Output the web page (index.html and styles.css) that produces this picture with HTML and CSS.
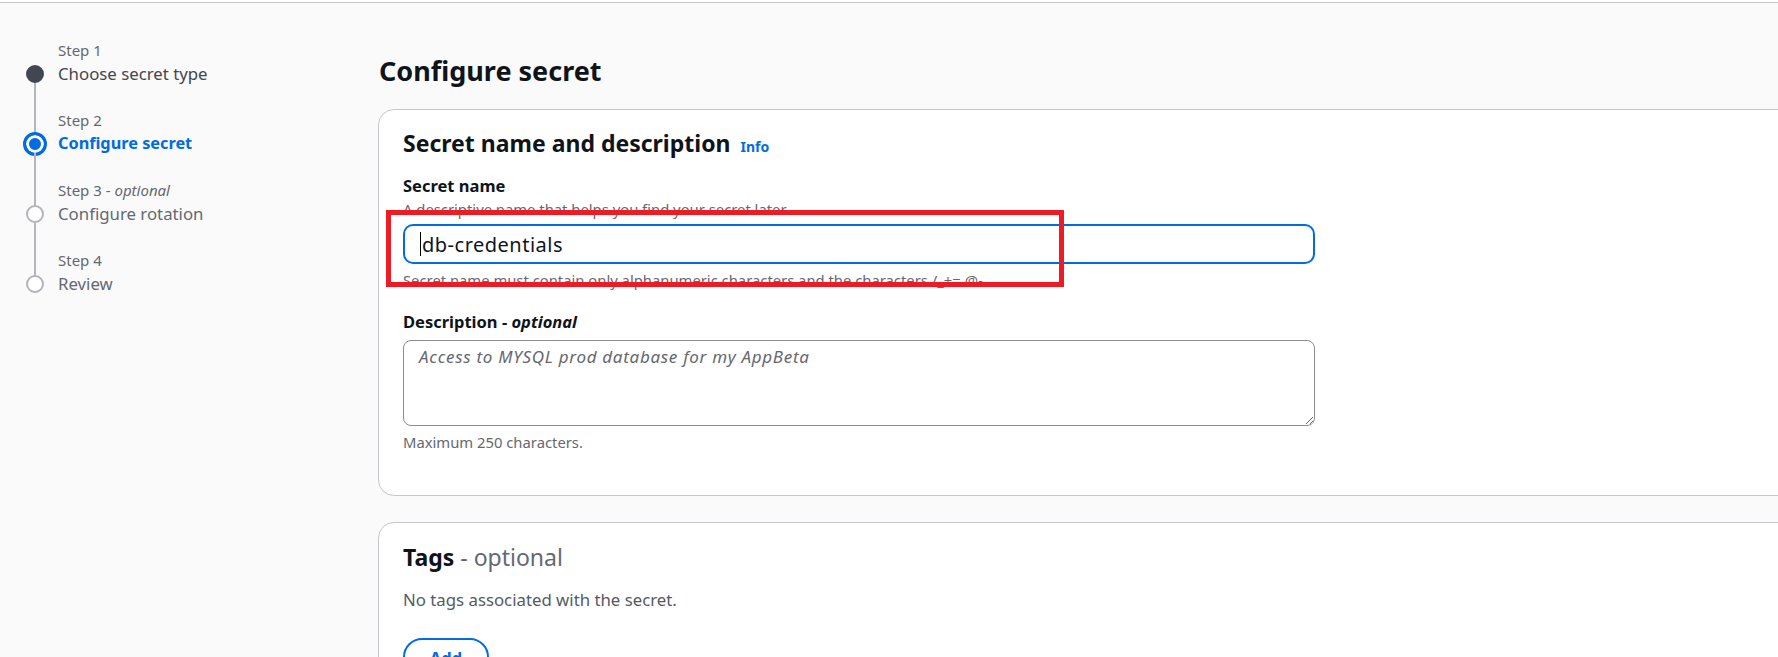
FILE: index.html
```html
<!DOCTYPE html>
<html lang="en">
<head>
<meta charset="utf-8">
<title>Configure secret</title>
<link rel="stylesheet" href="styles.css">
</head>
<body>
<div class="topbar"></div>
<div class="layout">
  <nav class="sidebar">
    <ol class="steps">
      <li class="step first visited">
        <div class="rail"><span class="seg seg-top"></span><span class="dot"></span><span class="seg seg-bottom"></span></div>
        <div class="step-text"><div class="step-label">Step 1</div><div class="step-title">Choose secret type</div></div>
      </li>
      <li class="step active">
        <div class="rail"><span class="seg seg-top"></span><span class="dot"></span><span class="seg seg-bottom"></span></div>
        <div class="step-text"><div class="step-label">Step 2</div><div class="step-title">Configure secret</div></div>
      </li>
      <li class="step">
        <div class="rail"><span class="seg seg-top"></span><span class="dot"></span><span class="seg seg-bottom"></span></div>
        <div class="step-text"><div class="step-label">Step 3 - <i>optional</i></div><div class="step-title">Configure rotation</div></div>
      </li>
      <li class="step last">
        <div class="rail"><span class="seg seg-top"></span><span class="dot"></span><span class="seg seg-bottom"></span></div>
        <div class="step-text"><div class="step-label">Step 4</div><div class="step-title">Review</div></div>
      </li>
    </ol>
  </nav>
  <main class="main">
    <h1 class="page-title">Configure secret</h1>
    <section class="card card-secret">
      <h2 class="card-title">Secret name and description <a class="info" href="#">Info</a></h2>
      <div class="field">
        <div class="label">Secret name</div>
        <div class="desc">A descriptive name that helps you find your secret later.</div>
        <div class="input"><span class="caret"></span>db-credentials</div>
        <div class="hint">Secret name must contain only alphanumeric characters and the characters /_+=.@-</div>
      </div>
      <div class="field field-desc">
        <div class="label">Description - <i>optional</i></div>
        <textarea class="textarea" placeholder="Access to MYSQL prod database for my AppBeta"></textarea>
        <div class="hint">Maximum 250 characters.</div>
      </div>
      <div class="highlight"></div>
    </section>
    <section class="card card-tags">
      <h2 class="card-title">Tags<span class="opt"> - optional</span></h2>
      <p class="empty">No tags associated with the secret.</p>
      <button class="btn">Add</button>
    </section>
  </main>
</div>
</body>
</html>
```
FILE: styles.css
```css
* { box-sizing: border-box; }
html, body {
  margin: 0;
  padding: 0;
  overflow: hidden;
  background: #fafafa;
  font-family: "Noto Sans", "Open Sans", sans-serif;
  color: #0f141a;
}
.topbar {
  height: 3px;
  border-bottom: 1px solid #c6c6cd;
  background: #fff;
}
.layout {
  display: flex;
  align-items: flex-start;
}
.sidebar {
  flex: 0 0 378px;
  padding: 36px 0 0 26px;
}
.steps {
  list-style: none;
  margin: 0;
  padding: 0;
}
.step {
  display: flex;
  gap: 14px;
}
.rail {
  width: 18px;
  display: flex;
  flex-direction: column;
  align-items: center;
}
.seg {
  width: 2px;
  background: #b4b4bb;
}
.seg-top { height: 26px; }
.seg-bottom { height: 26px; }
.first .seg-top, .last .seg-bottom { background: transparent; }
.dot {
  width: 18px;
  height: 18px;
  border-radius: 50%;
  border: 2px solid #b4b4bb;
  background: #fff;
}
.visited .dot {
  background: #424650;
  border-color: #424650;
}
.active .dot {
  width: 24px;
  height: 24px;
  margin: -3px 0;
  border: 3px solid #006ce0;
  background: #006ce0;
  box-shadow: inset 0 0 0 3px #fff;
}
.step-text { padding-bottom: 23px; }
.step-label {
  font-size: 15px;
  line-height: 22px;
  color: #656871;
}
.step-title {
  font-size: 16.8px;
  line-height: 25px;
  color: #656871;
}
.visited .step-title { color: #424650; }
.active .step-title { color: #006ce0; font-weight: 700; font-size: 16.3px; }

.main {
  flex: 0 0 1500px;
  padding-top: 50px;
}
.page-title {
  margin: 0 0 20px;
  font-size: 27px;
  line-height: 36px;
  font-weight: 700;
  padding-left: 1px;
}
.card {
  position: relative;
  background: #fff;
  border: 1px solid #c6c6cd;
  border-radius: 16px;
  padding: 18px 24px 43px;
}
.card-title {
  margin: 0;
  font-size: 23px;
  line-height: 30px;
  font-weight: 700;
}
.info {
  margin-left: 4px;
  font-size: 14px;
  font-weight: 700;
  color: #006ce0;
  text-decoration: none;
}
.field { margin-top: 13px; width: 912px; }
.field-desc { margin-top: 21px; }
.label {
  font-size: 16.5px;
  line-height: 22px;
  font-weight: 700;
}
.desc {
  margin-top: 2px;
}
.desc, .hint {
  font-size: 14.8px;
  line-height: 20px;
  color: #656871;
}
.input {
  margin-top: 5px;
  height: 40px;
  border: 2px solid #006ce0;
  border-radius: 10px;
  padding: 0 16px;
  display: flex;
  align-items: center;
  font-size: 20px;
  letter-spacing: 0.5px;
  color: #0f141a;
}
.caret {
  width: 1px;
  height: 24px;
  background: #000;
  margin: 0 1px 0 -1px;
}
.hint { margin-top: 6px; }
.textarea {
  display: block;
  margin-top: 7px;
  width: 100%;
  height: 86px;
  border: 1px solid #8c8c94;
  border-radius: 8px;
  padding: 4px 15px;
  font-family: inherit;
  font-size: 17px;
  line-height: 24px;
  background: #fff;
  resize: vertical;
}
.textarea::placeholder {
  color: #656871;
  font-style: italic;
  letter-spacing: 0.7px;
}
.highlight {
  position: absolute;
  left: 7px;
  top: 100px;
  width: 678px;
  height: 77px;
  border: 5px solid #ed1c24;
  pointer-events: none;
}
.card-tags { margin-top: 26px; }
.card-tags .card-title { margin-top: 1px; }
.opt { font-weight: 400; color: #656871; }
.empty {
  margin: 16px 0 0;
  font-size: 16.8px;
  line-height: 24px;
  color: #545b64;
}
.btn {
  margin-top: 26px;
  width: 86px;
  height: 38px;
  border: 2px solid #006ce0;
  border-radius: 20px;
  background: #fff;
  color: #006ce0;
  font-family: inherit;
  font-size: 16.5px;
  font-weight: 700;
}
```
